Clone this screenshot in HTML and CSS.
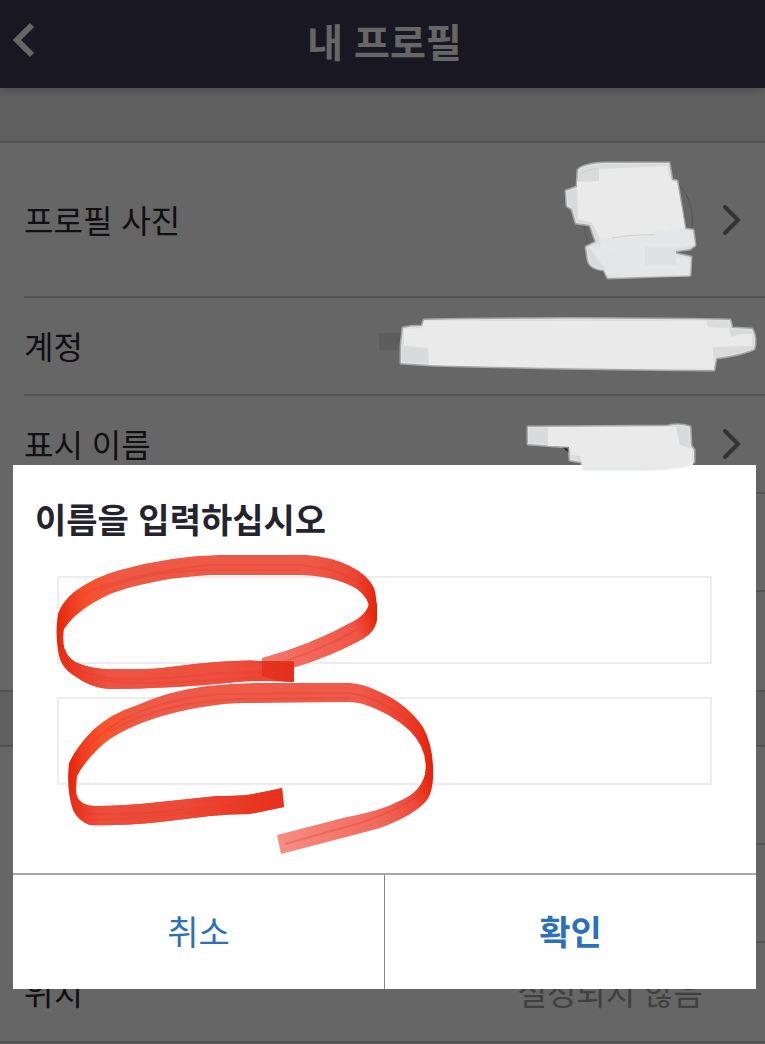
FILE: index.html
```html
<!DOCTYPE html>
<html lang="ko">
<head>
    <meta charset="UTF-8">
    <meta name="viewport" content="width=device-width, initial-scale=1.0">
    <title>내 프로필</title>
    <link rel="stylesheet" href="styles.css">
</head>
<body>
    <header class="topbar">
        <button type="button" class="back">
            <svg width="24" height="36" viewBox="0 0 24 36"><path d="M20 3 L5 18 L20 33"/></svg>
        </button>
        <h1>내 프로필</h1>
    </header>

    <main>
        <ul class="list">
            <li class="row row-photo">
                <span class="label">프로필 사진</span>
                <span class="avatar"></span>
                <svg class="chevron" width="20" height="32" viewBox="0 0 20 32"><path d="M4 3 L17 16 L4 29"/></svg>
                <svg class="scribble scribble-photo" viewBox="560 155 145 130">
                    <path class="wash" d="M578 170 Q583 164 605 163 L669 163 L672 180 L677 181 L685 229 L693 230 L695 245 L690 249 L668 252 L691 257 L690 275 L608 278 L604 270 Q590 269 588 260 L586 247 L596 242 L590 225 L576 223 L572 209 L567 206 L566 191 L577 187 Z"/>
                    <path class="solid" d="M599 169 L667 166 L671 181 L677 183 L682 210 L685 228 L640 235 L600 239 L592 223 L578 219 L577 182 L599 181 Z"/>
                    <path class="wash" d="M600 240 L680 229 L691 232 L694 245 L645 252 L604 250 Z"/>
                    <path class="wash" d="M590 247 L604 244 L668 255 L689 259 L689 275 L608 276 L603 265 Z"/>
                    <path class="patch" d="M645 247 H676 V265 H645 Z"/>
                    <path class="crease" d="M580 174 Q588 169 598 168 M612 238 Q635 234 655 235"/>
                </svg>
            </li>
            <li class="row">
                <span class="label">계정</span>
                <svg class="scribble scribble-account" viewBox="375 310 390 65">
                    <path class="smudge" d="M379 333 H402 V350 H379 Z"/>
                    <path class="wash" d="M403 328 Q410 326 422 326 L424 320 Q570 317 730 320 L732 328 L752 329 Q757 338 754 349 Q740 355 716 358 L714 370 Q560 369 430 365 L401 363 L401 346 Z"/>
                    <path class="solid" d="M404 329 L422 328 L424 321 L706 321 L708 327 L729 328 L731 337 Q742 333 752 334 L752 346 L713 347 L714 369 Q560 368 429 365 L428 348 L404 346 Z"/>
                </svg>
            </li>
            <li class="row">
                <span class="label">표시 이름</span>
                <svg class="chevron" width="20" height="32" viewBox="0 0 20 32"><path d="M4 3 L17 16 L4 29"/></svg>
                <svg class="scribble scribble-name" viewBox="520 418 180 56">
                    <path class="ink" d="M562 447 L570 447 L570 454 Z"/>
                    <path class="wash" d="M528 427 L668 426 Q680 423 690 427 L691 446 L694 450 L694 462 Q688 469 640 470 L584 470 L581 462 L570 460 L569 447 L528 444 Z"/>
                    <path class="solid" d="M548 427 L676 427 L680 445 L692 449 L693 465 L583 465 L580 456 L571 455 L569 446 L548 446 Z"/>
                </svg>
            </li>
            <li class="row"></li>
            <li class="row"></li>
        </ul>

        <ul class="list">
            <li class="row"></li>
            <li class="row"></li>
            <li class="row">
                <span class="label">위치</span>
                <span class="value">설정되지 않음</span>
            </li>
        </ul>
    </main>

    <div class="overlay">
        <form class="dialog" role="dialog" aria-labelledby="dialogTitle">
            <h2 id="dialogTitle">이름을 입력하십시오</h2>
            <div class="fields">
                <input type="text" name="lastName" aria-labelledby="dialogTitle">
                <input type="text" name="firstName" aria-labelledby="dialogTitle">
            </div>
            <div class="actions">
                <button type="button" class="cancel">취소</button>
                <button type="button" class="confirm">확인</button>
            </div>

            <!-- red marker circles -->
            <svg class="marker" viewBox="13 465 743 524">
                <defs>
                    <linearGradient id="red1" gradientUnits="userSpaceOnUse" x1="57" y1="0" x2="377" y2="0">
                        <stop offset="0" stop-color="#e62408"/>
                        <stop offset="0.04" stop-color="#ec3a20"/>
                        <stop offset="0.09" stop-color="#f6502c"/>
                        <stop offset="0.2" stop-color="#ee5946"/>
                        <stop offset="0.8" stop-color="#ef5847"/>
                        <stop offset="0.93" stop-color="#ec4635"/>
                        <stop offset="1" stop-color="#e62208"/>
                    </linearGradient>
                    <linearGradient id="red2" gradientUnits="userSpaceOnUse" x1="68" y1="0" x2="433" y2="0">
                        <stop offset="0" stop-color="#e62408"/>
                        <stop offset="0.04" stop-color="#ee3d20"/>
                        <stop offset="0.09" stop-color="#f8522a"/>
                        <stop offset="0.2" stop-color="#ee5a47"/>
                        <stop offset="0.8" stop-color="#ef5a4a"/>
                        <stop offset="0.93" stop-color="#ec3d2b"/>
                        <stop offset="1" stop-color="#e62208"/>
                    </linearGradient>
                    <linearGradient id="tail1" gradientUnits="userSpaceOnUse" x1="262" y1="665" x2="376" y2="615">
                        <stop offset="0" stop-color="#f4786c"/>
                        <stop offset="0.8" stop-color="#ef5546"/>
                        <stop offset="1" stop-color="#e62208"/>
                    </linearGradient>
                    <linearGradient id="tail2" gradientUnits="userSpaceOnUse" x1="277" y1="845" x2="432" y2="780">
                        <stop offset="0" stop-color="#f88d84"/>
                        <stop offset="0.6" stop-color="#f16a5d"/>
                        <stop offset="0.85" stop-color="#ec4a3a"/>
                        <stop offset="1" stop-color="#e62208"/>
                    </linearGradient>
                    <linearGradient id="end1" gradientUnits="userSpaceOnUse" x1="62" y1="0" x2="294" y2="0">
                        <stop offset="0" stop-color="#e83018"/>
                        <stop offset="0.2" stop-color="#ee5343"/>
                        <stop offset="0.7" stop-color="#ee4f3e"/>
                        <stop offset="1" stop-color="#ec3d2a"/>
                    </linearGradient>
                    <linearGradient id="end2" gradientUnits="userSpaceOnUse" x1="74" y1="0" x2="284" y2="0">
                        <stop offset="0" stop-color="#e83018"/>
                        <stop offset="0.12" stop-color="#ed4d3c"/>
                        <stop offset="0.5" stop-color="#ed4a38"/>
                        <stop offset="0.85" stop-color="#e93622"/>
                        <stop offset="1" stop-color="#e8301c"/>
                    </linearGradient>
                </defs>

                <path fill="url(#tail1)" d="M262 658 Q310 645 350 623 Q367 615 369 603 L377 603 V620 Q375 632 363 639 Q330 657 293 668 L262 677 Z"/>
                <path fill="url(#red1)" d="M294 682 Q264 680 237 682 Q170 689 110 689 Q90 688 75 676 Q60 668 58 650 Q55 632 58 614 Q62 602 74 592 Q94 577 120 570 Q170 556 220 555 L307 555 Q332 557 350 566 Q368 575 374 588 Q378 600 376 624 L369 612 Q371 600 357 589 Q333 575 297 575 L210 575 Q173 577 140 585 Q112 591 93 603 Q73 615 64 629 Q62 640 65 651 Q69 660 80 664 Q95 670 115 669 Q150 670 170 667 Q235 659 262 661 L294 662 Z"/>
                <path fill="url(#end1)" d="M58 648 L65 649 Q68 660 80 664 Q95 670 115 669 Q150 670 170 667 Q235 659 262 661 L294 662 V682 Q264 680 237 682 Q170 689 110 689 Q90 688 75 676 Q61 668 58 648 Z"/>
                <path class="overlap" d="M262 661 H294 V682 L278 681 L262 676 Z"/>
                <path class="streak" d="M82 595 Q120 575 210 565 L300 565 Q345 569 364 587 M66 661 Q80 675 115 679 Q165 680 200 675 Q230 672 290 672 M270 666 Q320 651 358 629"/>
                <path class="streak" d="M100 590 Q150 570 215 570 L300 570 M90 678 Q130 686 200 681 L255 677"/>

                <path fill="url(#tail2)" d="M277 835 L347 817 Q380 811 397 802 Q424 792 426 768 L433 768 Q434 790 427 800 Q415 815 380 828 Q335 840 281 854 Z"/>
                <path fill="url(#red2)" d="M284 807 Q265 811 250 814 Q230 814 210 816 L160 822 Q120 826 90 825 Q78 821 73 810 Q66 790 69 763 Q77 746 93 730 Q112 713 135 706 Q168 691 207 686 Q235 683 263 683 L350 683 Q365 684 380 692 Q407 704 423 727 Q434 747 433 776 L425 776 Q429 750 410 731 Q391 713 363 704 Q355 702 347 702 L247 703 Q225 703 203 707 Q160 714 130 728 Q108 738 97 750 Q84 763 77 776 Q75 795 78 799 Q82 806 95 806 Q125 806 160 802 L217 796 Q235 796 247 795 Q265 792 282 788 Z"/>
                <path fill="url(#end2)" d="M70 794 L76 794 Q80 806 95 806 Q125 806 160 802 L217 796 Q235 796 247 795 Q265 792 282 788 L284 807 Q265 811 250 814 Q230 814 210 816 L160 822 Q120 826 90 825 Q74 820 70 794 Z"/>
                <path class="streak" d="M90 745 Q130 702 220 694 L350 693 Q395 702 418 732 M82 813 Q120 817 170 811 L240 804 L280 797 M285 844 L360 823 Q405 808 424 790"/>
                <path class="streak" d="M110 731 Q160 702 240 699 L350 698 M90 820 Q150 818 205 810"/>
            </svg>
        </form>
    </div>
</body>
</html>
```
FILE: styles.css
```css
* {
    margin: 0;
    padding: 0;
    box-sizing: border-box;
}

body {
    font-family: 'Noto Sans CJK KR', sans-serif;
    background: #eeeef0;
    color: #2a2a30;
    min-height: 100vh;
}

.topbar {
    position: relative;
    display: flex;
    align-items: center;
    justify-content: center;
    height: 88px;
    padding: 0 0 8px 4px;
    background: #3c3a56;
    color: #fff;
    box-shadow: 0 2px 8px rgba(0, 0, 0, 0.2);
}

.topbar h1 {
    font-size: 39px;
    line-height: 60px;
    font-weight: 700;
}

.back {
    position: absolute;
    left: 12px;
    top: 22px;
    height: 36px;
    border: none;
    background: none;
}

.back path {
    fill: none;
    stroke: #fff;
    stroke-width: 6;
}

/* profile list */

.list {
    list-style: none;
    margin-top: 53px;
    padding-left: 24px;
    background: #fff;
    border-top: 2px solid #ccc;
    border-bottom: 2px solid #ccc;
}

.row {
    position: relative;
    display: flex;
    align-items: center;
    height: 98px;
    padding-right: 24px;
    border-bottom: 2px solid #d2d2d2;
}

.row:last-child {
    border-bottom: none;
}

.row-photo {
    height: 155px;
}

.label {
    flex: 1;
    padding-bottom: 2px;
    font-size: 32px;
    line-height: 48px;
}

.value {
    margin-right: 38px;
    padding-bottom: 2px;
    font-size: 32px;
    line-height: 48px;
    color: #a0a0a0;
}

.avatar {
    width: 110px;
    height: 110px;
    margin-right: 28px;
    border: 1px solid #d2d2d2;
    border-radius: 50%;
}

.chevron path {
    fill: none;
    stroke: #808080;
    stroke-width: 4;
    stroke-linecap: round;
}

/* eraser strokes over the private values */

.scribble {
    position: absolute;
    z-index: 3;
    pointer-events: none;
}

.scribble-photo {
    width: 145px;
    top: 12px;
    right: 60px;
}

.scribble-account {
    width: 390px;
    top: 12px;
    right: 0;
}

.scribble-name {
    width: 180px;
    top: 22px;
    right: 65px;
}

.wash {
    fill: #e6e7e8;
    fill-opacity: 0.9;
    stroke: #e6e7e8;
    stroke-opacity: 0.5;
    stroke-width: 3;
    stroke-linejoin: round;
}

.solid {
    fill: #eaeaea;
}

.patch {
    fill: #dfe0e1;
}

.smudge {
    fill: #5d5d5d;
}

.ink {
    fill: #222;
}

.crease {
    fill: none;
    stroke: #cfcfcf;
}

/* dialog */

.overlay {
    position: fixed;
    inset: 0;
    z-index: 2;
    display: flex;
    align-items: flex-end;
    padding: 0 9px 55px 13px;
    background: rgba(0, 0, 0, 0.6);
}

.dialog {
    position: relative;
    flex: 1;
    background: #fff;
}

.dialog h2 {
    padding: 28px 22px 0;
    font-size: 34px;
    line-height: 52px;
    font-weight: 700;
    color: #24242e;
}

.fields {
    display: flex;
    flex-direction: column;
    gap: 33px;
    padding: 31px 44px 88px;
}

.fields input {
    width: 100%;
    height: 88px;
    padding: 0 16px;
    border: 2px solid #ededed;
    background: #fff;
    font-family: inherit;
    font-size: 32px;
    outline: none;
}

.actions {
    display: flex;
    border-top: 2px solid #a8a8a8;
}

.actions button {
    flex: 1;
    height: 114px;
    padding-bottom: 4px;
    border: none;
    background: #fff;
    font-family: inherit;
    font-size: 34px;
    color: #2b70b8;
    cursor: pointer;
}

.actions .cancel {
    border-right: 1px solid #888;
}

.actions .confirm {
    font-weight: 700;
}

.marker {
    position: absolute;
    left: 0;
    top: 0;
    width: 743px;
    pointer-events: none;
}

.overlap {
    fill: #e02c18;
    fill-opacity: 0.7;
}

.streak {
    fill: none;
    stroke: #e03a28;
    stroke-opacity: 0.3;
    stroke-width: 2;
}
```
